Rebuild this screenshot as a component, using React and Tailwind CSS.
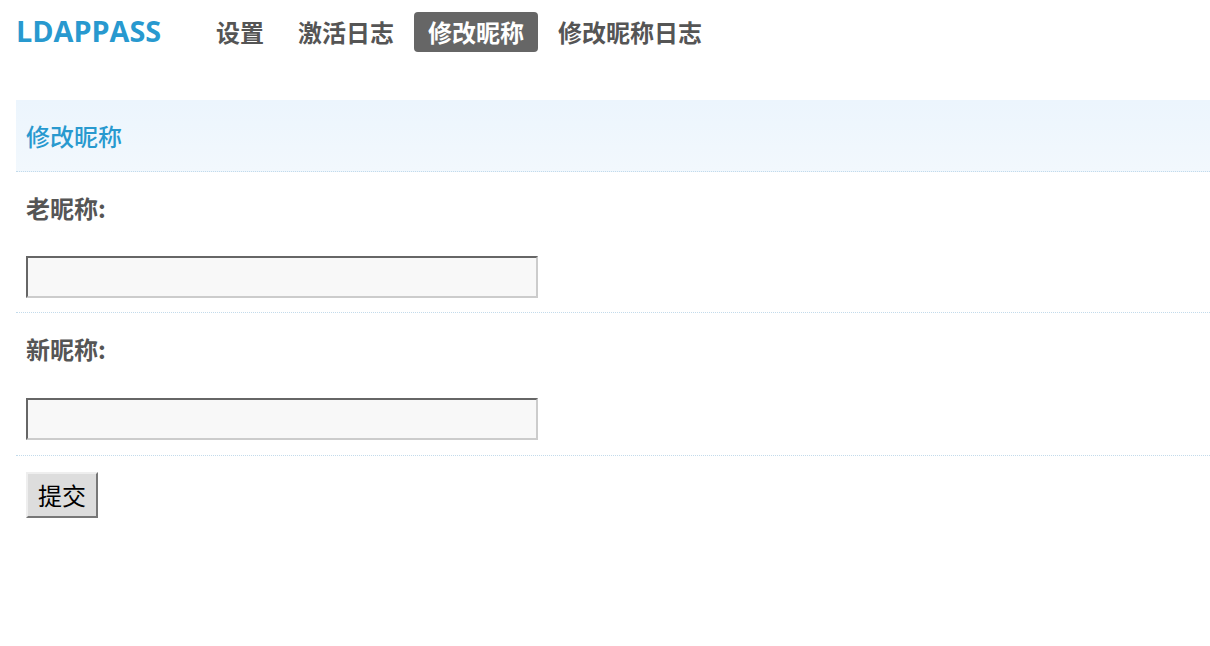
import { useState } from "react";

const cjk = { fontFamily: '"Noto Sans CJK SC", "Noto Sans", sans-serif' };

const navItems = ["设置", "激活日志", "修改昵称", "修改昵称日志"];

function Field({ label, value, onChange, last }) {
  return (
    <div className={`pl-[10px] pt-[18px] border-b border-dotted border-[#c3dbeb] ${last ? "pb-[15px]" : "pb-[14px]"}`}>
      <div className="h-[36px] leading-[36px] text-[24px] font-semibold text-[#555]">{label}</div>
      <input
        type="text"
        value={value}
        onChange={(e) => onChange(e.target.value)}
        className={`block w-[512px] h-[42px] bg-[#f8f8f8] border-2 border-t-[#666] border-l-[#666] border-r-[#ccc] border-b-[#ccc] outline-none px-2 text-[20px] ${last ? "mt-[31px]" : "mt-[30px]"}`}
      />
    </div>
  );
}

export default function App() {
  const [active, setActive] = useState("修改昵称");
  const [oldName, setOldName] = useState("");
  const [newName, setNewName] = useState("");

  return (
    <div className="min-h-[646px] bg-white pl-4" style={cjk}>
      {/* Top nav */}
      <div className="flex items-center pt-3">
        <div
          className="text-[28.8px] font-bold text-[#2899cf] w-[186px] -mt-[2px] leading-[38px]"
          style={{ fontFamily: '"Open Sans", sans-serif' }}
        >
          LDAPPASS
        </div>
        <nav className="flex gap-[6px]">
          {navItems.map((item) => (
            <button
              key={item}
              onClick={() => setActive(item)}
              className={`h-10 px-[14px] rounded-[4px] text-[24px] font-bold leading-[38px] ${
                active === item ? "bg-[#666] text-white" : "text-[#555]"
              }`}
            >
              {item}
            </button>
          ))}
        </nav>
      </div>

      {/* Panel */}
      <div className="mt-12">
        <div className="h-[72px] pl-[10px] flex items-center bg-gradient-to-b from-[#ecf5fd] to-[#f2f8fd] border-b border-dotted border-[#c3dbeb]">
          <h2 className="text-[24px] font-medium text-[#2899cf]">修改昵称</h2>
        </div>

        <Field label="老昵称:" value={oldName} onChange={setOldName} />
        <Field label="新昵称:" value={newName} onChange={setNewName} last />

        <div className="pl-[10px] pt-[16px]">
          <button className="w-[72px] h-[46px] bg-[#dddddd] border-2 border-t-[#eee] border-l-[#eee] border-r-[#777] border-b-[#777] text-[24px] text-black">
            提交
          </button>
        </div>
      </div>
    </div>
  );
}
